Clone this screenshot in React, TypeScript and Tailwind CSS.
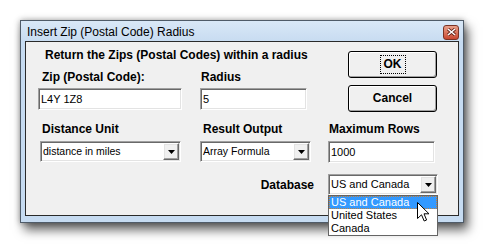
import React from "react";

const FONT = "font-['Liberation_Sans',Arial,sans-serif]";

function Arrow() {
  return (
    <div className="h-full w-[16px] flex items-center justify-center bg-[#f0f0f0] border border-t-white border-l-white border-r-[#696969] border-b-[#696969] shadow-[inset_-1px_-1px_0_#a0a0a0,inset_1px_1px_0_#e3e3e3]">
      <svg width="7" height="4" viewBox="0 0 7 4">
        <path d="M0 0h7L3.5 4z" fill="#000" />
      </svg>
    </div>
  );
}

function Field({ value, className = "" }: { value: string; className?: string }) {
  return (
    <div
      className={`h-[22px] flex items-center pl-[2px] bg-white border border-t-[#a0a0a0] border-l-[#a0a0a0] border-b-white border-r-white shadow-[inset_1px_1px_0_#696969,inset_-1px_-1px_0_#e3e3e3] text-[11px] text-black ${className}`}
    >
      {value}
    </div>
  );
}

function Combo({ value, className = "", text = "text-[10.5px]" }: { value: string; className?: string; text?: string }) {
  return (
    <div
      className={`h-[21px] flex items-center bg-white border border-t-[#a0a0a0] border-l-[#a0a0a0] border-b-white border-r-white shadow-[inset_1px_1px_0_#696969,inset_-1px_-1px_0_#e3e3e3] p-[1px] pl-[2px] ${className}`}
    >
      <span className={`flex-1 ${text} text-black`}>{value}</span>
      <Arrow />
    </div>
  );
}

function Btn({ label, focus }: { label: string; focus?: boolean }) {
  return (
    <div className="h-[27px] w-[89px] rounded-[3px] border border-black bg-[#f0f0f0] shadow-[inset_1px_1px_0_#fff,inset_-1px_-1px_0_#a0a0a0] flex items-center justify-center">
      <span className={`text-[12px] font-bold leading-[17px] px-[3px] ${focus ? "outline outline-1 outline-dotted outline-black" : ""}`}>
        {label}
      </span>
    </div>
  );
}

export default function App() {
  return (
    <div className={`w-[484px] h-[244px] bg-white pl-[20px] pt-[20px] ${FONT}`}>
      {/* window */}
      <div className="w-[444px] h-[203px] border border-[#4f5b68] bg-[#c6dbf1] flex flex-col shadow-[0_0_6px_rgba(0,0,0,0.35),4px_7px_10px_rgba(0,0,0,0.6)]">
        {/* title bar */}
        <div className="h-[20px] flex items-center justify-between pl-[6px] pr-[4px] bg-gradient-to-b from-[#d9e8f7] to-[#c8dcf1]">
          <span className="text-[12px] leading-[14px] text-black pt-[1px]">Insert Zip (Postal Code) Radius</span>
          <div className="w-[16px] h-[15px] mt-[2px] rounded-[3px] border border-[#7a3325] bg-gradient-to-b from-[#e8a08a] to-[#c8452f] flex items-center justify-center">
            <svg width="9" height="8" viewBox="0 0 9 8">
              <path d="M1 1l7 6M8 1L1 7" stroke="#5a1a10" strokeWidth="3" />
              <path d="M1 1l7 6M8 1L1 7" stroke="#fff" strokeWidth="1.6" />
            </svg>
          </div>
        </div>

        {/* client area */}
        <div className="mx-[4px] h-[175px] border border-[#2a2a2a] bg-[#f0f0f0] pl-[12px] text-black">
          {/* top row */}
          <div className="flex">
            <div className="w-[310px]">
              <div className="mt-[6px] ml-[7px] h-[14px] text-[12px] leading-[14px] font-bold">
                Return the Zips (Postal Codes) within a radius
              </div>
              <div className="flex mt-[8px]">
                <div className="w-[144px]">
                  <div className="ml-[4px] h-[14px] text-[12px] leading-[14px] font-bold">Zip (Postal Code):</div>
                  <Field value="L4Y 1Z8" className="mt-[4px] w-[144px]" />
                </div>
                <div className="ml-[18px] w-[107px]">
                  <div className="ml-[1px] h-[14px] text-[12px] leading-[14px] font-bold">Radius</div>
                  <Field value="5" className="mt-[4px] w-[107px]" />
                </div>
              </div>
            </div>
            <div className="mt-[9px] flex flex-col gap-[7px]">
              <Btn label="OK" focus />
              <Btn label="Cancel" />
            </div>
          </div>

          {/* second row */}
          <div className="flex mt-[10px]">
            <div className="w-[144px]">
              <div className="ml-[4px] h-[14px] text-[12px] leading-[14px] font-bold">Distance Unit</div>
              <Combo value="distance in miles" className="mt-[5px] ml-[2px] w-[141px]" />
            </div>
            <div className="ml-[18px] w-[111px]">
              <div className="ml-[3px] h-[14px] text-[12px] leading-[14px] font-bold">Result Output</div>
              <Combo value="Array Formula" className="mt-[5px] w-[111px]" />
            </div>
            <div className="ml-[17px] w-[107px]">
              <div className="ml-[1px] h-[14px] text-[12px] leading-[14px] font-bold">Maximum Rows</div>
              <Field value="1000" className="mt-[5px] w-[107px] h-[21px]" />
            </div>
          </div>

          {/* database row */}
          <div className="flex items-center mt-[11px]">
            <div className="w-[276px] text-right text-[12px] leading-[14px] font-bold">Database</div>
            <div className="relative ml-[14px] w-[110px]">
              <Combo value="US and Canada" className="w-[110px]" text="text-[11px]" />
              {/* open dropdown list */}
              <div className="absolute left-0 top-[21px] w-[110px] border border-[#646464] bg-white text-[11px] leading-[13px] z-10">
                <div className="h-[13px] pl-[2px] bg-[#3399ff] text-white outline outline-1 outline-dotted outline-[#c08040] -outline-offset-1">
                  US and Canada
                </div>
                <div className="h-[13px] pl-[2px] text-black">United States</div>
                <div className="h-[13px] pl-[2px] text-black">Canada</div>
                <svg className="absolute left-[88px] top-[6px]" width="13" height="20" viewBox="0 0 13 20">
                  <path d="M0.5 0.5V16.5L4.5 12.8L7.2 19L9.6 18L7 11.8H12Z" fill="#fff" stroke="#000" strokeWidth="1" strokeLinejoin="miter" />
                </svg>
              </div>
            </div>
          </div>
        </div>
      </div>
    </div>
  );
}
